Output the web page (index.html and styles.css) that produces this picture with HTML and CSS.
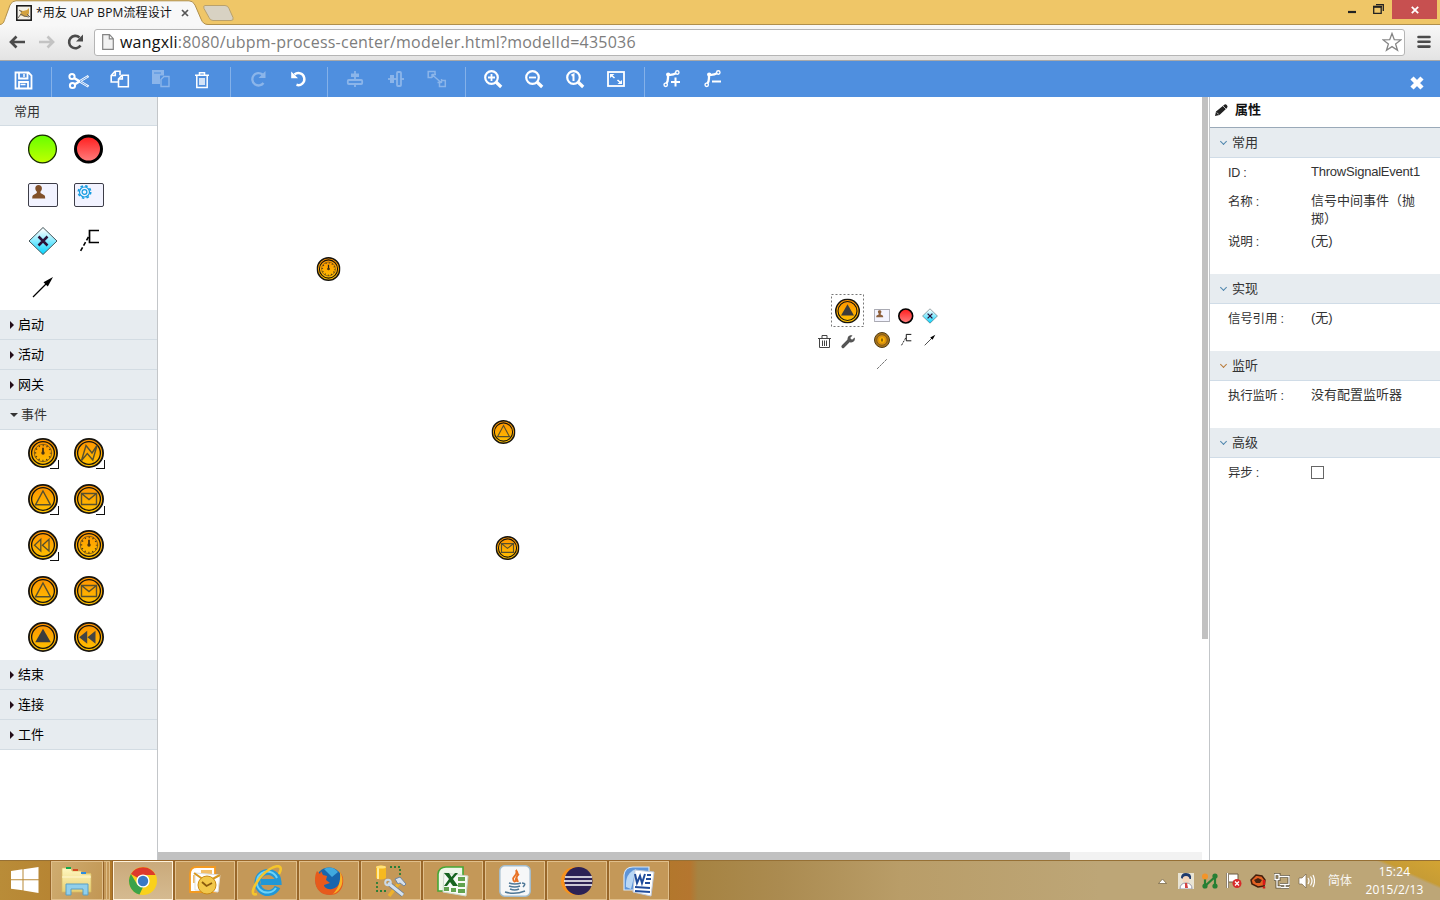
FILE: index.html
```html
<!DOCTYPE html>
<html lang="zh-CN">
<head>
<meta charset="utf-8">
<title>*用友 UAP BPM流程设计</title>
<link rel="stylesheet" href="styles.css">
</head>
<body>
<svg class="defs" width="0" height="0">
  <defs>
    <linearGradient id="gOrange" x1="0" y1="0" x2="0" y2="1"><stop offset="0" stop-color="#ff9100"/><stop offset="1" stop-color="#ffc400"/></linearGradient>
    <linearGradient id="gGreen" x1="0" y1="0" x2="0" y2="1"><stop offset="0" stop-color="#66ff00"/><stop offset="1" stop-color="#c0ff00"/></linearGradient>
    <linearGradient id="gRed" x1="0" y1="0" x2="0" y2="1"><stop offset="0" stop-color="#ff1c1c"/><stop offset="1" stop-color="#ff8080"/></linearGradient>
    <linearGradient id="gCyan" x1="0" y1="0" x2="0" y2="1"><stop offset="0.1" stop-color="#f2fdff"/><stop offset="1" stop-color="#00d4ff"/></linearGradient>
    <linearGradient id="gFolder" x1="0" y1="0" x2="0" y2="1"><stop offset="0" stop-color="#fff7c0"/><stop offset="1" stop-color="#e8cf72"/></linearGradient>
    <symbol id="ring" viewBox="0 0 30 30"><circle cx="15" cy="15" r="14.1" fill="url(#gOrange)" stroke="#17140e" stroke-width="1.8"/><circle cx="15" cy="15" r="11.400" fill="none" stroke="#17140e" stroke-width="1.3"/></symbol>
    <symbol id="timer" viewBox="0 0 30 30"><use href="#ring"/><circle cx="15" cy="15" r="8.700" fill="none" stroke="#7d5a18" stroke-width=".9"/><circle cx="15" cy="15" r="7.700" fill="none" stroke="#4f3d1a" stroke-width="1.800" stroke-dasharray="1.200 2.831" stroke-dashoffset=".6"/><path d="M15 9.800v5.200" stroke="#2c2417" stroke-width="1.600"/><circle cx="15" cy="15" r="1.700" fill="#4a3412"/></symbol>
    <symbol id="error" viewBox="0 0 30 30"><use href="#ring"/><path d="M7.500 22.500l4.500-15 6 7.500 5-7.500-4.200 14.500-5.500-6.500z" fill="none" stroke="#57502f" stroke-width="1.400"/></symbol>
    <symbol id="signal" viewBox="0 0 30 30"><use href="#ring"/><path d="M15 7L22.500 20.800H7.500z" fill="none" stroke="#57502f" stroke-width="1.400"/></symbol>
    <symbol id="signalFull" viewBox="0 0 30 30"><use href="#ring"/><path d="M15 6.800L22.800 20.300H7.200z" fill="#3c3c3c"/></symbol>
    <symbol id="message" viewBox="0 0 30 30"><use href="#ring"/><path d="M7.500 9.500h15v11h-15zl7.500 6 7.500-6" fill="none" stroke="#57502f" stroke-width="1.400"/></symbol>
    <symbol id="comp" viewBox="0 0 30 30"><use href="#ring"/><path d="M12.800 9.300v11.700l-6.300-5.800zM21 9.300v11.700l-6.500-5.800z" fill="none" stroke="#57502f" stroke-width="1.300"/></symbol>
    <symbol id="compFull" viewBox="0 0 30 30"><use href="#ring"/><path d="M13.200 8.800v13l-8-6.600zM21.500 8.800v13l-8-6.600z" fill="#444"/></symbol>
    <symbol id="start" viewBox="0 0 30 30"><circle cx="14.500" cy="15" r="13.900" fill="url(#gGreen)" stroke="#182b00" stroke-width="1.300"/></symbol>
    <symbol id="end" viewBox="0 0 30 30"><circle cx="14.500" cy="15" r="13" fill="url(#gRed)" stroke="#000" stroke-width="3"/></symbol>
    <symbol id="userTask" viewBox="0 0 30 30"><rect x=".5" y="3.500" width="29" height="23" rx="1.500" fill="#f2f3ff" stroke="#3d3d48"/><path d="M10.500 5c-2 0-3.300 1.300-3.200 3.200.1 1.700.7 2.600 1.500 3.300v1.500L5 15.200q-.8.500-.8 3.200h13q0-2.700-.8-3.200L12.500 13v-1.500c.8-.7 1.300-1.600 1.400-3.300C14 6.300 12.600 5 10.500 5z" fill="#81502a"/></symbol>
    <symbol id="serviceTask" viewBox="0 0 30 30"><rect x=".5" y="3.500" width="29" height="23" rx="1.500" fill="#f2f3ff" stroke="#3d3d48"/><circle cx="10.500" cy="12" r="5" fill="none" stroke="#169ce0" stroke-width="1.200"/><circle cx="10.500" cy="12" r="6.200" fill="none" stroke="#169ce0" stroke-width="1.600" stroke-dasharray="2.500 2.370"/><circle cx="10.500" cy="12" r="2.400" fill="none" stroke="#169ce0" stroke-width="1.200"/></symbol>
    <symbol id="gateway" viewBox="0 0 30 30"><path d="M15 1.500L29 15 15 28.500 1 15z" fill="url(#gCyan)" stroke="#45565b"/><path d="M10.500 10.500l9 9M19.500 10.500l-9 9" stroke="#2b1238" stroke-width="2.500"/></symbol>
    <symbol id="note" viewBox="0 0 30 30"><path d="M25 4.500H15.500V16.500H25" fill="none" stroke="#000" stroke-width="1.700"/><path d="M14.500 11L6 26" stroke="#000" stroke-width="1.600" stroke-dasharray="4 2"/></symbol>
    <symbol id="flow" viewBox="0 0 30 30"><path d="M5 25L20 10" stroke="#000" stroke-width="1.300"/><path d="M25 5l-9.500 5.200 4.300 4.300z" fill="#000"/></symbol>
    <symbol id="trash" viewBox="0 0 18 20"><path d="M2 5.200h14M6.500 5V2.700h5V5M3.800 5.500v12h10.400v-12M7 8v7M9 8v7M11 8v7" fill="none" stroke="currentColor" stroke-width="1.500"/></symbol>
    <symbol id="mag" viewBox="0 0 20 20"><circle cx="8.500" cy="8.500" r="6.300" fill="none" stroke="#fff" stroke-width="2.200"/><path d="M13 13l5.200 5" stroke="#fff" stroke-width="3.200"/></symbol>
    <symbol id="bend" viewBox="0 0 20 20"><path d="M4 15Q6 13 6 9V5.500Q10 6.500 14.500 4" fill="none" stroke="#fff" stroke-width="2.300"/><circle cx="3.700" cy="15.800" r="1.700" fill="#4f8fdf" stroke="#fff" stroke-width="1.400"/><circle cx="6.200" cy="5.500" r="2.100" fill="#fff"/><circle cx="15.300" cy="3.500" r="1.700" fill="#4f8fdf" stroke="#fff" stroke-width="1.400"/></symbol>
  </defs>
</svg>

<div class="tabstrip">
  <svg class="tabshape" width="240" height="25"><path d="M0 24.500C4 24 4 21 6 16L10 5Q12 .8 16 .8H189Q193 .8 195 5L201 19Q203 24.500 208 24.500H240V25H0z" fill="#f8f8f8"/><path d="M0 24.500C4 24 4 21 6 16L10 5Q12 .8 16 .8H189Q193 .8 195 5L201 19Q203 24.500 208 24.500H240" fill="none" stroke="#b08f4b"/><path d="M205 5.500h20q3 0 4 3l4 9q1 3-2 3h-18q-3 0-4-3l-5-9q-1-3 1-3z" fill="#d8d2c3" stroke="#b9a16c"/></svg>
  <div class="tab">
    <svg width="16" height="16"><rect x=".8" y=".8" width="14.400" height="14.400" fill="#f3f0e8" stroke="#111" stroke-width="1.500"/><path d="M4 10l1-3-1-2 3 1 4-1 2-2v5l-1 3-3 1z" fill="#d3a23f"/><path d="M2 13l3-4 3 2 5 1M3 5l3 2M11 9l3 3" fill="none" stroke="#6a665f"/></svg>
    <span class="tabtitle">*用友 UAP BPM流程设计</span>
    <svg width="8" height="8"><path d="M1 1l6 6M7 1L1 7" stroke="#555" stroke-width="1.700"/></svg>
  </div>
  <div class="wincontrols">
    <svg width="8" height="20"><path d="M0 12h8" stroke="#222" stroke-width="2.200"/></svg>
    <svg width="11" height="20"><path d="M.7 7.200h7.500v6.100H.7zM3 4.700h7.300V11" fill="none" stroke="#222" stroke-width="1.300"/><path d="M0 6.500h9" stroke="#222" stroke-width="1.600"/></svg>
    <div class="winclose"><svg width="8" height="8"><path d="M.8.8l6.400 6.400M7.200.8L.8 7.200" stroke="#fff" stroke-width="1.800"/></svg></div>
  </div>
</div>

<div class="browserbar">
  <svg width="84" height="22">
    <path d="M11 11h14M16.500 5.500L11 11l5.500 5.500" fill="none" stroke="#4b4b4b" stroke-width="2.700"/>
    <path d="M39 11h14M47.500 5.500L53 11l-5.500 5.500" fill="none" stroke="#c3c3c3" stroke-width="2.700"/>
    <path d="M80.500 14.500A6.200 6.200 0 1 1 79.500 6.500" fill="none" stroke="#4b4b4b" stroke-width="2.600"/><path d="M83 3.500v7h-7z" fill="#4b4b4b"/>
  </svg>
  <div class="omnibox">
    <svg width="12" height="16"><path d="M.7.7h6.800l3.800 4v10.600H.7zM7.300.7v4.200h4" fill="#f2f2f2" stroke="#858585" stroke-width="1.200"/></svg>
    <span class="url"><b>wangxli</b>:8080/ubpm-process-center/modeler.html?modelId=435036</span>
    <svg width="20" height="20"><path d="M10 1.500l2.300 6.200 6.500.2-5.200 4.100 1.900 6.300L10 14.600l-5.500 3.700L6.400 12 1.200 7.900l6.500-.2z" fill="#fff" stroke="#858585" stroke-width="1.300"/></svg>
  </div>
  <svg width="14" height="14"><path d="M1.500 2h11M1.500 6.800h11M1.500 11.600h11" stroke="#4b4b4b" stroke-width="2.600" stroke-linecap="round"/></svg>
</div>

<div class="appbar">
  <span class="tool first"><svg width="19" height="19"><path d="M1.500 1.500h13l3 3v13h-16zM5 2v5.500h8.500V2M5 17v-6h9v6" fill="none" stroke="#fff" stroke-width="1.800"/><path d="M10 3v3M6.500 13.500h5" stroke="#fff" stroke-width="1.500"/></svg></span>
  <i class="sep"></i>
  <span class="tool low"><svg width="22" height="18"><circle cx="4" cy="4.500" r="2.600" fill="none" stroke="#fff" stroke-width="2"/><circle cx="4.500" cy="13.500" r="2.600" fill="none" stroke="#fff" stroke-width="2"/><path d="M6 6l14.500 8.500M6.500 12.500L20.500 4" stroke="#fff" stroke-width="2.600"/><path d="M12 9.200l7.500-4.500M12 9.400l7.500 4.600" stroke="#4f8fdf" stroke-width=".8"/></svg></span>
  <span class="tool"><svg width="20" height="18"><path d="M8 12H1.200V5.500L5 1.200h5v4M5.300 1.500v4H1.500M12 5.200h6.300v11.600H8.500V9zM12.300 5.500V9H8.800" fill="none" stroke="#fff" stroke-width="1.600"/></svg></span>
  <span class="tool off"><svg width="20" height="18"><path d="M1 0h12v5.500H9V14H1z" fill="#fff"/><path d="M13 6.500h5v10H10V9.500z" fill="none" stroke="#fff" stroke-width="1.400"/><path d="M3 3h7" stroke="#4f8fdf"/></svg></span>
  <span class="tool white"><svg width="18" height="20"><use href="#trash"/></svg></span>
  <i class="sep"></i>
  <span class="tool off"><svg width="18" height="18"><path d="M14.500 13A6.200 6.200 0 1 1 13.500 4.500" fill="none" stroke="#fff" stroke-width="2.300"/><path d="M16.500 1v7h-7z" fill="#fff"/></svg></span>
  <span class="tool"><svg width="18" height="18"><path d="M4.500 4.500A6 6 0 1 1 6.500 14.800" fill="none" stroke="#fff" stroke-width="2.500"/><path d="M1.200 1.500v6.800h6.800z" fill="#fff"/></svg></span>
  <i class="sep"></i>
  <span class="tool off"><svg width="18" height="18"><path d="M9 1v16" stroke="#fff" stroke-width="1.800"/><path d="M5 3.500h8v3.500H5z" fill="#fff"/><rect x="1.800" y="10" width="14.400" height="4" rx="1" fill="#5d99e2" stroke="#fff" stroke-width="1.800"/></svg></span>
  <span class="tool off"><svg width="18" height="18"><path d="M1 9h16" stroke="#fff" stroke-width="1.800"/><path d="M3 5h4v8H3z" fill="#fff"/><rect x="10" y="2" width="4" height="14" rx="1" fill="#5d99e2" stroke="#fff" stroke-width="1.800"/></svg></span>
  <span class="tool off"><svg width="20" height="18"><path d="M5 7.500H1.200V1.500H8V4M12.500 11.500V16.500h5.800V10.500H15" fill="none" stroke="#fff" stroke-width="1.500"/><path d="M5 4.500l9 8M5 4v4M5 4.500h4M14.500 13V9M14.500 12.500h-4" stroke="#fff" stroke-width="1.400"/></svg></span>
  <i class="sep"></i>
  <span class="tool"><svg width="20" height="20"><use href="#mag"/><path d="M5 8.500h7M8.500 5v7" stroke="#fff" stroke-width="1.800"/></svg></span>
  <span class="tool"><svg width="20" height="20"><use href="#mag"/><path d="M5 8.500h7" stroke="#fff" stroke-width="1.800"/></svg></span>
  <span class="tool"><svg width="20" height="20"><use href="#mag"/><path d="M6.500 6.500l2-1v6.500" fill="none" stroke="#fff" stroke-width="2"/></svg></span>
  <span class="tool"><svg width="18" height="16"><rect x="1" y="1" width="16" height="14" fill="none" stroke="#fff" stroke-width="1.800"/><path d="M4 4l3.500 3M14 12l-3.500-3" stroke="#fff" stroke-width="1.600"/><path d="M3 3h4.500L3 7zM15 13h-4.500L15 9z" fill="#fff"/></svg></span>
  <i class="sep"></i>
  <span class="tool"><svg width="20" height="20"><use href="#bend"/><path d="M9 13h9M13.500 8.500v9" stroke="#fff" stroke-width="2"/></svg></span>
  <span class="tool"><svg width="20" height="20"><use href="#bend"/><path d="M9 12.500h9" stroke="#fff" stroke-width="2"/></svg></span>
  <svg class="appclose" width="16" height="16"><path d="M3 3l10 10M13 3L3 13" stroke="#fff" stroke-width="4.500"/></svg>
</div>

<div class="workspace">
  <div class="palette">
    <div class="ghead plain">常用</div>
    <div class="grid">
      <span><svg width="30" height="30"><use href="#start"/></svg></span>
      <span><svg width="30" height="30"><use href="#end"/></svg></span>
      <span><svg width="30" height="30"><use href="#userTask"/></svg></span>
      <span><svg width="30" height="30"><use href="#serviceTask"/></svg></span>
      <span><svg width="30" height="30"><use href="#gateway"/></svg></span>
      <span><svg width="30" height="30"><use href="#note"/></svg></span>
      <span><svg width="30" height="30"><use href="#flow"/></svg></span>
    </div>
    <div class="ghead"><i class="arrow"></i>启动</div>
    <div class="ghead"><i class="arrow"></i>活动</div>
    <div class="ghead"><i class="arrow"></i>网关</div>
    <div class="ghead opened"><i class="arrow down"></i>事件</div>
    <div class="grid">
      <span class="more"><svg width="30" height="30"><use href="#timer"/></svg></span>
      <span class="more"><svg width="30" height="30"><use href="#error"/></svg></span>
      <span class="more"><svg width="30" height="30"><use href="#signal"/></svg></span>
      <span class="more"><svg width="30" height="30"><use href="#message"/></svg></span>
      <span class="more"><svg width="30" height="30"><use href="#comp"/></svg></span>
      <span><svg width="30" height="30"><use href="#timer"/></svg></span>
      <span><svg width="30" height="30"><use href="#signal"/></svg></span>
      <span><svg width="30" height="30"><use href="#message"/></svg></span>
      <span><svg width="30" height="30"><use href="#signalFull"/></svg></span>
      <span><svg width="30" height="30"><use href="#compFull"/></svg></span>
    </div>
    <div class="ghead"><i class="arrow"></i>结束</div>
    <div class="ghead"><i class="arrow"></i>连接</div>
    <div class="ghead"><i class="arrow"></i>工件</div>
  </div>

  <div class="canvas">
    <svg class="diagram" width="1044" height="755" viewBox="158 97 1044 755">
      <use href="#timer" x="316.500" y="257" width="24" height="24"/>
      <use href="#signal" x="491.500" y="420" width="24" height="24"/>
      <use href="#message" x="495.500" y="536" width="24" height="24"/>
      <rect x="831.500" y="294.500" width="32" height="32" fill="none" stroke="#777" stroke-dasharray="2 2"/>
      <use href="#signalFull" x="835" y="298.500" width="25" height="25"/>
      <use href="#userTask" x="874" y="307.500" width="16" height="16" opacity=".9"/>
      <use href="#end" x="898" y="308" width="16" height="16"/>
      <use href="#gateway" x="922" y="308" width="16" height="16"/>
      <circle cx="882" cy="340" r="7.500" fill="#a87417" stroke="#4f3b18"/><circle cx="882" cy="340" r="5.300" fill="#d9920f" stroke="#82591a"/><circle cx="882" cy="340" r="2.800" fill="#ffb500"/><path d="M882 338.500v3" stroke="#5a3d0d" stroke-width="1.300"/>
      <use href="#note" x="898" y="332" width="16" height="16"/>
      <use href="#flow" x="922" y="332" width="16" height="16"/>
      <path d="M877 369l10-10" stroke="#777" stroke-dasharray="3 .6"/>
      <path d="M818 338.500h13M822 338v-2.500h5v2.500M819.500 339v8.500h10v-8.500M822.500 340.500v5.500M824.500 340.500v5.500M826.500 340.500v5.500" fill="none" stroke="#444"/>
      <path d="M843 346.500l6-6" stroke="#555" stroke-width="3.200" stroke-linecap="round"/><path d="M852.500 335.500l-2.300 2.600 1.800 1.600 2.700-2.200c1 3-1.800 5.700-4.800 4.700l-2.200-2.100c-.8-3.200 1.600-5.700 4.800-4.600z" fill="#555"/>
    </svg>
    <div class="vtrack"><div class="vthumb"></div></div>
    <div class="htrack"><div class="hthumb"></div></div>
  </div>

  <div class="props">
    <div class="ptitle"><svg width="14" height="14"><path d="M0 13l1-4.500L9 2q1.300-1.300 2.800 0t.2 3L4.500 12z" fill="#222"/><path d="M8 3l3 3M1.800 9.500l2 2" stroke="#fff" stroke-width=".7"/></svg>属性</div>
    <div class="phead"><i class="chev"></i>常用</div>
    <div class="pbody tall">
      <div class="row"><span class="key">ID :</span><span class="val latin">ThrowSignalEvent1</span></div>
      <div class="row double"><span class="key">名称 :</span><span class="val">信号中间事件（抛<br>掷）</span></div>
      <div class="row"><span class="key">说明 :</span><span class="val">(无)</span></div>
    </div>
    <div class="phead"><i class="chev"></i>实现</div>
    <div class="pbody"><div class="row"><span class="key">信号引用 :</span><span class="val">(无)</span></div></div>
    <div class="phead"><i class="chev warm"></i>监听</div>
    <div class="pbody"><div class="row"><span class="key">执行监听 :</span><span class="val">没有配置监听器</span></div></div>
    <div class="phead"><i class="chev"></i>高级</div>
    <div class="pbody"><div class="row"><span class="key">异步 :</span><span class="val"><i class="check"></i></span></div></div>
  </div>
</div>

<div class="taskbar">
  <div class="startbtn"><svg width="28" height="26"><path d="M0 4l11.500-1.700v10H0zM12.500 2.200L27.500 0v12.300h-15zM0 13.300h11.500v10L0 21.700zM12.500 13.300h15V26l-15-2.400z" fill="#fff"/></svg></div>
  <div class="task explorer"><svg width="34" height="32"><path d="M3 5h8l1 3h19v19H3z" fill="#e4c669"/><path d="M2 3h9l1 3h9l1 3h9v18H2z" fill="url(#gFolder)" stroke="#d8bc62" stroke-width=".7"/><path d="M6 2h5v2H6z" fill="#13a84c"/><path d="M13 4h5v2h-5z" fill="#d34a20"/><path d="M21 7h5v2h-5z" fill="#2c8de0"/><path d="M2 12h29" stroke="#fff8d0"/><path d="M6 30V19h22v11h-5v-6H11v6z" fill="#91cfeb" stroke="#5b9fc3"/></svg></div>
  <div class="stack"></div>
  <div class="task active"><svg width="30" height="30"><circle cx="15" cy="15" r="14" fill="#f9d11b"/><path d="M15 15L2.900 8A14 14 0 0 1 27.500 9H15z" fill="#dd3a2c"/><path d="M2.900 8L9.600 19l5.400 2-3.500 7.600A14 14 0 0 1 2.900 8z" fill="#3ba349"/><circle cx="15" cy="15" r="6.600" fill="#fff"/><circle cx="15" cy="15" r="5.200" fill="#3979c5"/></svg></div>
  <div class="task"><svg width="34" height="32"><path d="M2 27V9q0-7 7-7h18v25z" fill="#fff" stroke="#f39a20" stroke-width="1.800"/><path d="M5 18V10h6v8zM13 5h11v6H13z" fill="#f3be67"/><path d="M7 8l25 2-2 17-23-2z" fill="#fff" stroke="#ddd"/><path d="M6 8l13 9 13-7" fill="none" stroke="#d7981e" stroke-width="2"/><circle cx="19" cy="20" r="9" fill="#f2c84b" stroke="#c98a15"/><path d="M14 17l4.500 4 5.500-3" fill="none" stroke="#8a5a0d" stroke-width="1.800"/></svg></div>
  <div class="task"><svg width="34" height="32"><path d="M27.500 22A10.500 10.500 0 1 1 28.500 17H11" fill="none" stroke="#2297d6" stroke-width="6"/><path d="M26 23A10.500 10.500 0 1 1 27 13" fill="none" stroke="#6dd3f8" stroke-width="2"/><path d="M7 29c-6 2-5-4 0-12C14 6 26-1 30 2c2 2 0 5-1 7" fill="none" stroke="#f5c52b" stroke-width="2.600"/></svg></div>
  <div class="task"><svg width="32" height="32"><circle cx="16" cy="16" r="13.500" fill="#1865ac"/><path d="M11 4q8-4 14 3l-6 5z" fill="#40a9df"/><path d="M4 6c-4 7-3 24 13 24 13 0 15-14 12-20l-2-3c2 8-1 16-8 17-5 1-8-2-8-4l6-2-4-3 1-4-4-1-2-4-1 3z" fill="#e75a1c"/><path d="M27 7c5 8 2 19-7 22 5-5 8-12 7-22z" fill="#f8b326"/></svg></div>
  <div class="task"><svg width="34" height="34"><path d="M16 3h10v12M3 18v9h9" fill="none" stroke="#287e36" stroke-width="1.800" stroke-dasharray="2 2"/><path d="M2 3q5-3 10 0v11q-5 3-10 0z" fill="#f6b91f"/><path d="M4 3v12" stroke="#ffeb9d" stroke-width="2"/><ellipse cx="7" cy="3" rx="5" ry="1.600" fill="#ffe179"/><path d="M15 32l11-14" stroke="#efb22c" stroke-width="3.500"/><path d="M14 19l15 12" stroke="#667c94" stroke-width="4.500"/><path d="M14 19l15 12" stroke="#d5e2ee" stroke-width="3"/><circle cx="14" cy="18.500" r="2.800" fill="none" stroke="#cad9e8" stroke-width="2"/><path d="M21 15l5-2 6 7-2 2-4-3-2 1z" fill="#d5e0ec" stroke="#73859b"/></svg></div>
  <div class="task"><svg width="34" height="32"><path d="M2 26V9q1-7 8-7h17v24z" fill="#eff7e9" stroke="#45a735" stroke-width="1.600"/><path d="M8 8l24 3-2 20-23-4z" fill="#f7faf5" stroke="#ccd8c8"/><path d="M22 12h7v4h-7zM22 18h7v4h-7zM22 24h7v4h-7zM15 23h5v4h-5zM8 22h5v4H8z" fill="#61a34f"/><path d="M8 8h5l2.500 4 3.500-4h3l-5 6 5 7h-5l-3-4-3 4H8l5-7z" fill="#17641e"/></svg></div>
  <div class="task"><svg width="32" height="32"><rect x=".8" y=".8" width="30.400" height="30.400" rx="5" fill="#f6f7f8" stroke="#a3bdce" stroke-width="1.500"/><path d="M16 17c-6-5 4-6 1-12 5 6-2 6 0 12M20 9c-4 3-2 5-1 8" fill="none" stroke="#e87225" stroke-width="1.800"/><path d="M10 18q6 2 12 0M10 21q6 2 11 0M11 24q5 2 9 0M6 27q10 3 20-1M23 18q5 0 1 4" fill="none" stroke="#4e7797" stroke-width="1.500"/></svg></div>
  <div class="task"><svg width="34" height="30"><circle cx="15" cy="15" r="14" fill="#f7931e"/><circle cx="18.500" cy="15" r="14" fill="#2c2255"/><path d="M5 11h27M4 15h28M5 19h27" stroke="#fff" stroke-width="1.700"/></svg></div>
  <div class="task"><svg width="34" height="32"><path d="M2 25V10q1-8 9-8h16v23z" fill="#5d94d8" stroke="#d5e6f8" stroke-width="1.200"/><path d="M4 22Q3 8 14 4L9 24z" fill="#b9d7f5"/><path d="M13 5l19 2-3 24-18-4z" fill="#fff" stroke="#c1cbdb"/><path d="M25 10h4M24 14h5M23 18h5M13 22l15 1M13 26l15 1" stroke="#204c9b" stroke-width="2"/><path d="M13 9l2 9 3-7 2 7 3-9" fill="none" stroke="#204c9b" stroke-width="2"/></svg></div>
  <div class="tray">
    <span class="cell"><svg width="9" height="6"><path d="M.5 5.500L4.500 1l4 4.500z" fill="#fff" stroke="#6f5d3c" stroke-width=".7"/></svg></span>
    <span class="cell"><svg width="16" height="16"><path d="M0 0h16v16H0z" fill="#e9e4d4"/><path d="M3 5q0-5 5-5 6 0 5 6H5z" fill="#203b6d"/><circle cx="8" cy="6.500" r="3.500" fill="#f5d6bd"/><path d="M2 16q0-6 6-6t6 6z" fill="#fff" stroke="#99a"/><path d="M7 10h2l1 5H7z" fill="#d54343"/></svg></span>
    <span class="cell"><svg width="18" height="16"><path d="M4 4v9l10-9v9" fill="none" stroke="#267f34" stroke-width="2.200"/><circle cx="4" cy="3.500" r="3" fill="#f39428"/><circle cx="14" cy="3" r="2.600" fill="#267f34"/><circle cx="4" cy="13" r="2.600" fill="#267f34"/><circle cx="14" cy="13" r="2.600" fill="#267f34"/></svg></span>
    <span class="cell"><svg width="16" height="17"><path d="M2 2h10v8H2" fill="#fff" stroke="#6b5b42"/><path d="M1.500 1v15" stroke="#6b5b42" stroke-width="3"/><path d="M1.500 1v15" stroke="#fff" stroke-width="1.500"/><circle cx="11" cy="11.500" r="4.500" fill="#d72929"/><path d="M9 9.500l4 4M13 9.500l-4 4" stroke="#fff" stroke-width="1.300"/></svg></span>
    <span class="cell"><svg width="17" height="16"><path d="M1 7l5-5 6 1 3 4-1 6-6 1-6-3z" fill="#e36224" stroke="#431e0b" stroke-width="1.500"/><path d="M4 7l4-2 4 2-2 3H6z" fill="#4a2511"/><path d="M14 7v5M14 13.500v2" stroke="#d81818" stroke-width="2.500"/></svg></span>
    <span class="cell"><svg width="16" height="16"><path d="M5 3.500h10v8H6M7 14.500h8M11 11v3M1 1.500h4v5H1zM3 6v8h4" fill="none" stroke="#5d5038" stroke-width="3"/><path d="M5 3.500h10v8H6M7 14.500h8M11 11v3M1 1.500h4v5H1zM3 6v8h4" fill="none" stroke="#fff" stroke-width="1.300"/></svg></span>
    <span class="cell"><svg width="17" height="16"><path d="M1 5h3l4-4v14l-4-4H1z" fill="#fff" stroke="#6b5b42" stroke-width=".6"/><path d="M10 5q2 3 0 6M12.500 3.500q3 4.500 0 9M15 2q3 6 0 12" fill="none" stroke="#fff" stroke-width="1.200"/></svg></span>
    <span class="ime">简体</span>
    <div class="clock"><span>15:24</span><span>2015/2/13</span></div>
  </div>
</div>
</body>
</html>
```
FILE: styles.css
```css
* { box-sizing: border-box; }
body { margin: 0; width: 1440px; height: 900px; overflow: hidden; display: flex; flex-direction: column; background: #fff; font: 13px/18px "Liberation Sans", "Noto Sans CJK SC", sans-serif; color: #333; }
svg { display: block; flex: none; }
.defs { position: absolute; }

.tabstrip { position: relative; height: 25px; flex: none; display: flex; justify-content: space-between; background: #efc667; border-bottom: 1px solid #b08f4b; }
.tabshape { position: absolute; left: 0; top: 0; }
.tab { position: relative; display: flex; align-items: center; height: 26px; padding-left: 16px; }
.tabtitle { width: 145px; margin-left: 4px; font: 12px/18px "Open Sans", "Noto Sans CJK SC", sans-serif; letter-spacing: .12px; color: #111; white-space: nowrap; }
.wincontrols { display: flex; gap: 17px; padding-right: 3px; }
.winclose { width: 45px; height: 19px; margin-left: -9px; background: #c75050; display: flex; align-items: center; justify-content: center; }

.browserbar { height: 36px; flex: none; display: flex; align-items: center; padding-bottom: 1px; background: linear-gradient(#f8f8f8, #e3e3e3); border-bottom: 1px solid #a9a9a9; }
.omnibox { display: flex; align-items: center; width: 1311px; height: 27px; margin: 0 12px 0 10px; padding: 0 2px 0 7px; background: #fff; border: 1px solid #b5b5b5; border-radius: 3px; }
.url { flex: 1; margin-left: 6px; font: 16px/24px "Open Sans", sans-serif; letter-spacing: .22px; color: #7d7d7d; white-space: nowrap; }
.url b { font-weight: 400; color: #111; }

.appbar { height: 36px; flex: none; display: flex; align-items: center; padding-left: 3px; background: #4f8fdf; }
.tool { width: 41px; display: flex; justify-content: center; }
.tool.first { margin-right: -1px; padding-top: 2px; }
.tool.low { padding-top: 3px; }
.tool.white { color: #fff; padding-top: 1px; }
.tool.off { opacity: .34; }
.sep { width: 15px; height: 30px; margin-top: 6px; background: linear-gradient(#84b1e9, #84b1e9) 8px 0 / 1px 100% no-repeat; }
.appclose { margin: 7px 15px 0 auto; }

.workspace { flex: 1; min-height: 0; display: flex; }
.palette { width: 158px; border-right: 1px solid #c3c6c9; }
.ghead { height: 30px; padding-left: 10px; display: flex; align-items: center; background: #e7ecf0; border-bottom: 1px solid #d3dce3; color: #000; }
.ghead.plain { height: 29px; padding: 1px 0 0 14px; color: #333; }
.ghead.opened { color: #333; }
.arrow { width: 0; height: 0; margin: 1px 4px 0 0; border: 4px solid transparent; border-left-color: #220c18; border-right: 0; }
.arrow.down { margin-right: 3px; border: 4px solid transparent; border-top-color: #333; border-bottom: 0; }
.grid { display: grid; grid-template-columns: 46px 46px; grid-auto-rows: 46px; padding-left: 20px; }
.grid span { position: relative; display: flex; align-items: center; justify-content: center; }
.more::after { content: ""; position: absolute; right: 7px; bottom: 7px; width: 8px; height: 8px; border: solid #111; border-width: 0 1px 1px 0; }

.canvas { width: 1051px; display: grid; grid-template: 755px 8px / 1044px 7px; }
.vtrack { grid-column: 2; grid-row: 1; padding-right: 1px; }
.vthumb { height: 542px; background: #c1c1c1; }
.htrack { background: #f2f2f2; }
.hthumb { width: 912px; height: 8px; background: #c1c1c1; }

.props { flex: 1; border-left: 1px solid #c3c6c9; }
.ptitle { height: 31px; display: flex; align-items: center; gap: 6px; padding: 0 0 4px 5px; border-bottom: 1px solid #9aa9b8; font-weight: 700; color: #111; }
.phead { height: 30px; display: flex; align-items: center; padding-left: 10px; background: #e7ecf0; border-bottom: 1px solid #d0dce7; }
.chev { width: 5px; height: 5px; margin: -2px 6px 0 1px; border: solid #4f86ad; border-width: 0 1.5px 1.5px 0; transform: rotate(45deg); }
.chev.warm { border-color: #b97a39; }
.pbody { height: 47px; padding: 5px 0 0 18px; }
.pbody.tall { height: 116px; }
.row { display: flex; height: 29px; }
.row.double { height: 40px; }
.key { width: 83px; padding-top: 1px; font-size: 12.500px; letter-spacing: -.2px; }
.val { white-space: nowrap; }
.val.latin { letter-spacing: -.22px; }
.check { display: block; width: 13px; height: 13px; margin-top: 3px; border: 1px solid #666; background: #fff; }

.taskbar { height: 40px; flex: none; display: flex; background: linear-gradient(to top right, transparent 50%, #c79c35 56%, #d3a433 100%) right top / 64px 28px no-repeat, linear-gradient(90deg, #b98c38 0, #b78533 50px, #b17a2b 110px, #b1782b 660px, #b5762f 690px, #a68342 698px, #ab8b50 780px, #b99d68 900px, #bda677 1100px, #bda677 100%); border-top: 1px solid #967035; }
.startbtn { width: 51px; padding: 6px 0 0 11px; }
.task { width: 60px; height: 39px; margin-right: 2px; display: flex; align-items: center; justify-content: center; background: #c49858; border: 1px solid #e0bf8b; outline: 1px solid #99672a; outline-offset: 0; }
.task.explorer { width: 52px; margin-right: 0; background: linear-gradient(110deg, #cfac70, #c29754); }
.stack { width: 7px; margin-right: 3px; border: 1px solid #dfbd86; border-left-color: #936329; background: linear-gradient(90deg, #c49858 2px, #dfbd86 2px 3px, #c49858 3px); }
.task.active { background: linear-gradient(#caaa7b, #d5ba90); border-color: #fff3dc; }
.tray { margin-left: auto; display: flex; align-items: center; padding-right: 16px; color: #fff; }
.cell { width: 24px; display: flex; justify-content: center; }
.ime { width: 26px; margin-left: 10px; font-size: 12px; opacity: .9; }
.clock { display: flex; flex-direction: column; align-items: center; width: 59px; margin-left: 11px; font: 12px/18px "Open Sans", sans-serif; letter-spacing: .15px; white-space: nowrap; }
```
